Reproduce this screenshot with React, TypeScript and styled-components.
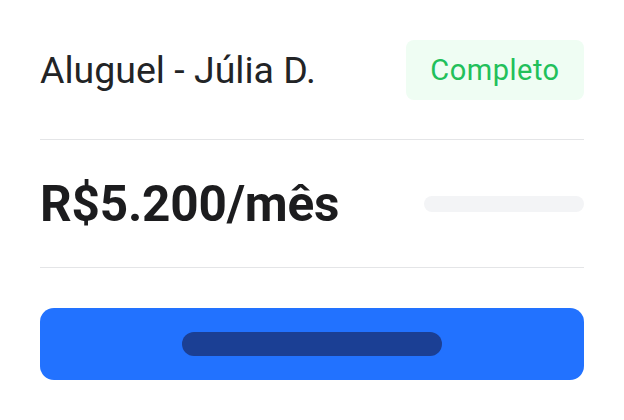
import React from "react"
import styled, { createGlobalStyle } from "styled-components"

const GlobalStyle = createGlobalStyle`
    html, body {
        margin: 0;
        padding: 0;
        background: #ffffff;
        font-family: Roboto, "Noto Sans", "Liberation Sans", sans-serif;
    }
`

const Card = styled.div`
    width: 624px;
    height: 420px;
    box-sizing: border-box;
    padding: 40px;
    display: flex;
    flex-direction: column;
    background: #ffffff;
`

const Header = styled.div`
    height: 60px;
    display: flex;
    align-items: center;
    justify-content: space-between;
`

const Title = styled.h2`
    margin: 0;
    font-size: 37.5px;
    font-weight: 400;
    color: #222426;
`

const Badge = styled.span`
    height: 60px;
    width: 178px;
    box-sizing: border-box;
    display: flex;
    align-items: center;
    justify-content: center;
    border-radius: 8px;
    background: #effdf3;
    color: #22c05a;
    font-size: 29px;
    font-weight: 400;
    letter-spacing: 0.5px;
`

const Divider = styled.hr<{ gap?: number }>`
    margin: ${(props) => (props.gap ?? 0) + "px"} 0 0 0;
    border: none;
    border-top: 1px solid #e4e5e7;
    height: 0;
`

const PriceRow = styled.div`
    height: 127px;
    display: flex;
    align-items: center;
    justify-content: space-between;
`

const Price = styled.span`
    font-size: 49.5px;
    font-weight: 700;
    color: #1c1c1e;
    letter-spacing: -0.2px;
`

const Skeleton = styled.div<{ width: number; height: number; color: string }>`
    width: ${(props) => props.width + "px"};
    height: ${(props) => props.height + "px"};
    border-radius: ${(props) => props.height / 2 + "px"};
    background: ${(props) => props.color};
`

const Button = styled.button`
    margin-top: 40px;
    height: 72px;
    width: 100%;
    border: none;
    border-radius: 14px;
    background: #2272ff;
    display: flex;
    align-items: center;
    justify-content: center;
    padding: 0;
`

const App: React.FC = () => {
    return (
        <>
            <GlobalStyle />
            <Card>
                <Header>
                    <Title>Aluguel - Júlia D.</Title>
                    <Badge>Completo</Badge>
                </Header>
                <Divider gap={39} />
                <PriceRow>
                    <Price>R$5.200/mês</Price>
                    <Skeleton width={160} height={16} color="#f3f4f6" />
                </PriceRow>
                <Divider />
                <Button>
                    <Skeleton width={260} height={24} color="#1b3f94" />
                </Button>
            </Card>
        </>
    )
}

export default App
